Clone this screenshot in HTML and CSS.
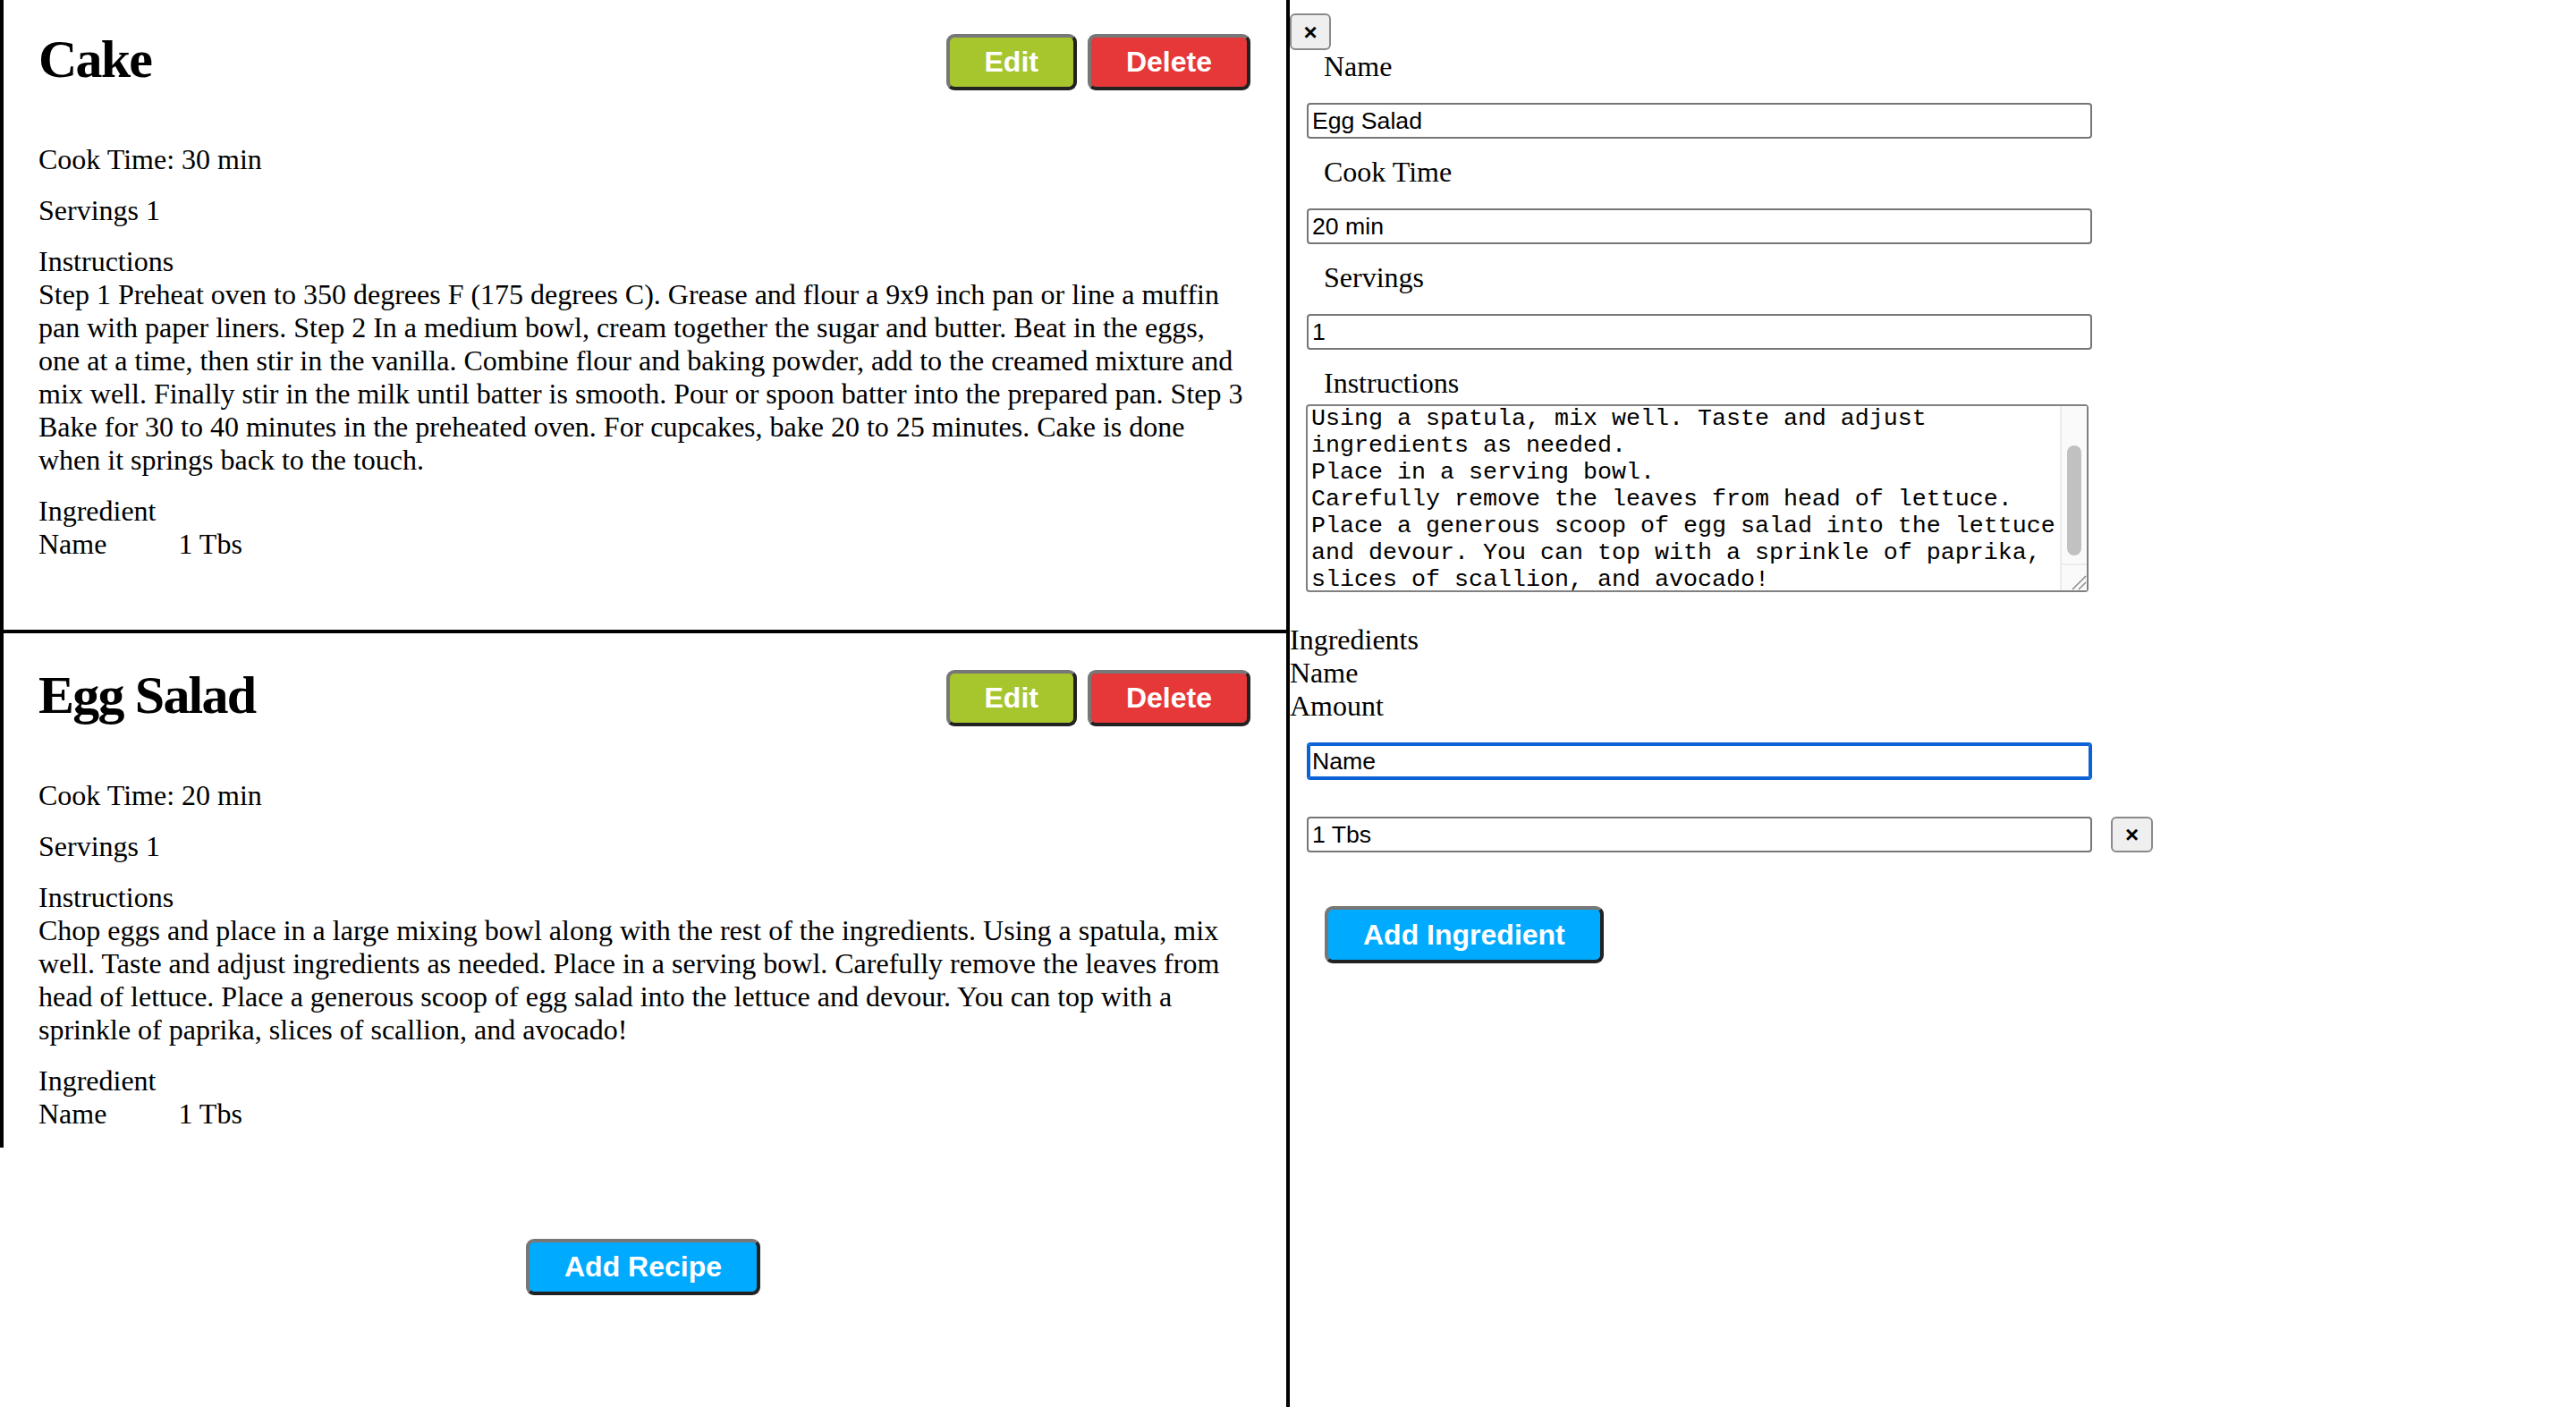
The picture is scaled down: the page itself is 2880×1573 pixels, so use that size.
FILE: index.html
```html
<!DOCTYPE html>
<html lang="en">
<head>
<meta charset="utf-8">
<title>Recipes</title>
<link rel="stylesheet" href="styles.css">
</head>
<body>
<main class="recipes">
  <div class="recipe-list">
    <section class="card">
      <header class="card-header">
        <h1 class="card-title">Cake</h1>
        <div class="actions">
          <button class="btn btn-edit">Edit</button>
          <button class="btn btn-delete">Delete</button>
        </div>
      </header>
      <p class="row">Cook Time: 30 min</p>
      <p class="row">Servings 1</p>
      <div class="row">
        <div>Instructions</div>
        <div>Step 1 Preheat oven to 350 degrees F (175 degrees C). Grease and flour a 9x9 inch pan or line a muffin pan with paper liners. Step 2 In a medium bowl, cream together the sugar and butter. Beat in the eggs, one at a time, then stir in the vanilla. Combine flour and baking powder, add to the creamed mixture and mix well. Finally stir in the milk until batter is smooth. Pour or spoon batter into the prepared pan. Step 3 Bake for 30 to 40 minutes in the preheated oven. For cupcakes, bake 20 to 25 minutes. Cake is done when it springs back to the touch.</div>
      </div>
      <div class="row">
        <div>Ingredient</div>
        <div class="ingredient"><span class="ing-name">Name</span><span>1 Tbs</span></div>
      </div>
    </section>
    <section class="card">
      <header class="card-header">
        <h1 class="card-title">Egg Salad</h1>
        <div class="actions">
          <button class="btn btn-edit">Edit</button>
          <button class="btn btn-delete">Delete</button>
        </div>
      </header>
      <p class="row">Cook Time: 20 min</p>
      <p class="row">Servings 1</p>
      <div class="row">
        <div>Instructions</div>
        <div>Chop eggs and place in a large mixing bowl along with the rest of the ingredients. Using a spatula, mix well. Taste and adjust ingredients as needed. Place in a serving bowl. Carefully remove the leaves from head of lettuce. Place a generous scoop of egg salad into the lettuce and devour. You can top with a sprinkle of paprika, slices of scallion, and avocado!</div>
      </div>
      <div class="row">
        <div>Ingredient</div>
        <div class="ingredient"><span class="ing-name">Name</span><span>1 Tbs</span></div>
      </div>
    </section>
  </div>
  <div class="add-recipe-wrap">
    <button class="btn btn-add btn-add-recipe">Add Recipe</button>
  </div>
</main>
<aside class="editor">
  <button class="close-btn">×</button>
  <label class="field-label">Name</label>
  <input class="field" type="text" value="Egg Salad">
  <label class="field-label">Cook Time</label>
  <input class="field" type="text" value="20 min">
  <label class="field-label">Servings</label>
  <input class="field" type="text" value="1">
  <label class="field-label">Instructions</label>
  <div class="ta-wrap">
    <textarea class="instructions" id="instructions">Chop eggs and place in a large mixing bowl along with the rest of the ingredients.
Using a spatula, mix well. Taste and adjust ingredients as needed.
Place in a serving bowl.
Carefully remove the leaves from head of lettuce.
Place a generous scoop of egg salad into the lettuce and devour. You can top with a sprinkle of paprika, slices of scallion, and avocado!</textarea>
    <div class="ta-track"><div class="ta-thumb"></div></div>
    <div class="ta-resizer">
      <svg width="28" height="28" viewBox="0 0 28 28"><path d="M12 27 L27 12 M19 27 L27 19" stroke="#8a8a8a" stroke-width="1.5" fill="none"/></svg>
    </div>
  </div>
  <div class="ing-heading">
    <div>Ingredients</div>
    <div>Name</div>
    <div>Amount</div>
  </div>
  <input class="field field-focused" type="text" value="Name">
  <div class="amount-row">
    <input class="field field-amount" type="text" value="1 Tbs">
    <button class="close-btn remove-btn">×</button>
  </div>
  <button class="btn btn-add btn-add-ingredient">Add Ingredient</button>
</aside>
<script src="script.js"></script>
</body>
</html>
```

FILE: styles.css
```css
html, body {
  margin: 0;
  padding: 0;
  background: #ffffff;
}

body {
  display: grid;
  grid-template-columns: 1438px 1fr;
  min-height: 100vh;
  font-family: "Liberation Serif", "Times New Roman", serif;
  font-size: 32px;
  line-height: normal;
  color: #000;
  overflow: hidden;
}

/* ---------- left column ---------- */
.recipes {
  display: flex;
  flex-direction: column;
}

.recipe-list {
  margin-top: -7px;
  height: 1290px;
  overflow: hidden;
  border-left: 4px solid #000;
}

.card {
  box-sizing: border-box;
  height: 711px;
  border-top: 4px solid #000;
  padding: 33px 40px 0 39px;
}

.card-header {
  display: flex;
  align-items: flex-start;
  justify-content: space-between;
  margin-bottom: 56px;
}

.card-title {
  margin: 0;
  font-size: 60px;
  letter-spacing: -1.8px;
  font-weight: bold;
  line-height: 73.6px;
}

.actions {
  display: flex;
  gap: 12px;
  margin-top: 8px;
}

.row {
  margin: 0 0 20px 0;
}

.ingredient {
  display: flex;
}

.ing-name {
  margin-right: 80px;
}

.add-recipe-wrap {
  display: flex;
  justify-content: center;
  margin-top: 102px;
}

/* ---------- buttons ---------- */
.btn {
  font-family: "Liberation Sans", Arial, sans-serif;
  font-size: 32px;
  font-weight: bold;
  line-height: normal;
  color: #ffffff;
  padding: 9px 39px;
  border: 4px solid;
  border-color: #777777 #222222 #222222 #777777;
  border-radius: 9px;
  cursor: pointer;
}

.btn-edit {
  background: #a7c62d;
}

.btn-delete {
  background: #e63838;
}

.btn-add {
  background: #00aaff;
}

.btn-add-ingredient {
  margin: 60px 0 0 39px;
  padding-top: 9.5px;
  padding-bottom: 9.5px;
}

/* ---------- right column ---------- */
.editor {
  border-left: 4px solid #000;
  display: flex;
  flex-direction: column;
  align-items: flex-start;
}

.close-btn {
  box-sizing: border-box;
  margin-top: 15px;
  width: 46px;
  height: 41px;
  padding: 0;
  background: #efefef;
  border: 2px solid #8a8a8a;
  border-radius: 6px;
  font-family: "Liberation Sans", Arial, sans-serif;
  font-size: 26px;
  font-weight: bold;
  line-height: 1;
  color: #000;
}

.field-label {
  display: block;
  padding-left: 38px;
}

.field {
  box-sizing: border-box;
  margin: 22px 0 19px 19px;
  width: 878px;
  height: 40px;
  padding: 0 4px;
  border: 2px solid #767676;
  border-radius: 4px;
  background: #fff;
  font-family: "Liberation Sans", Arial, sans-serif;
  font-size: 26.67px;
  color: #000;
  outline: none;
}

.field-focused {
  margin: 22px 0 0 19px;
  height: 42px;
  border-color: #0b62d6;
  box-shadow: inset 0 0 0 2px #0b62d6;
}

.ta-wrap {
  position: relative;
  margin: 5px 0 0 18px;
  width: 875px;
  height: 210px;
}

.instructions {
  display: block;
  box-sizing: border-box;
  width: 875px;
  height: 210px;
  margin: 0;
  padding: 4px 34px 4px 4px;
  border: 2px solid #808080;
  border-radius: 4px;
  font-family: "Liberation Mono", "Courier New", monospace;
  font-size: 26.67px;
  line-height: normal;
  color: #000;
  overflow: hidden;
  resize: none;
}

.ta-track {
  position: absolute;
  top: 2px;
  right: 2px;
  bottom: 30px;
  width: 28px;
  background: #fafafa;
  border-left: 2px solid #ececec;
  border-bottom: 2px solid #ececec;
}

.ta-thumb {
  position: absolute;
  top: 44px;
  left: 6px;
  width: 16px;
  height: 123px;
  border-radius: 8px;
  background: #c1c1c1;
}

.ta-resizer {
  position: absolute;
  right: 2px;
  bottom: 2px;
  width: 28px;
  height: 28px;
  background: #fafafa;
  border-left: 2px solid #ececec;
}

.ta-resizer svg {
  display: block;
}

.ing-heading {
  margin-top: 35px;
}

.amount-row {
  display: flex;
  align-items: flex-start;
  margin-top: 41px;
}

.field-amount {
  margin: 0 0 0 19px;
}

.remove-btn {
  margin: 0 0 0 21px;
  width: 47px;
  height: 40px;
}
```

FILE: script.js
```js
var ta = document.getElementById('instructions');
if (ta) {
  ta.scrollTop = Math.max(0, ta.scrollHeight - ta.clientHeight - 7);
}
```
